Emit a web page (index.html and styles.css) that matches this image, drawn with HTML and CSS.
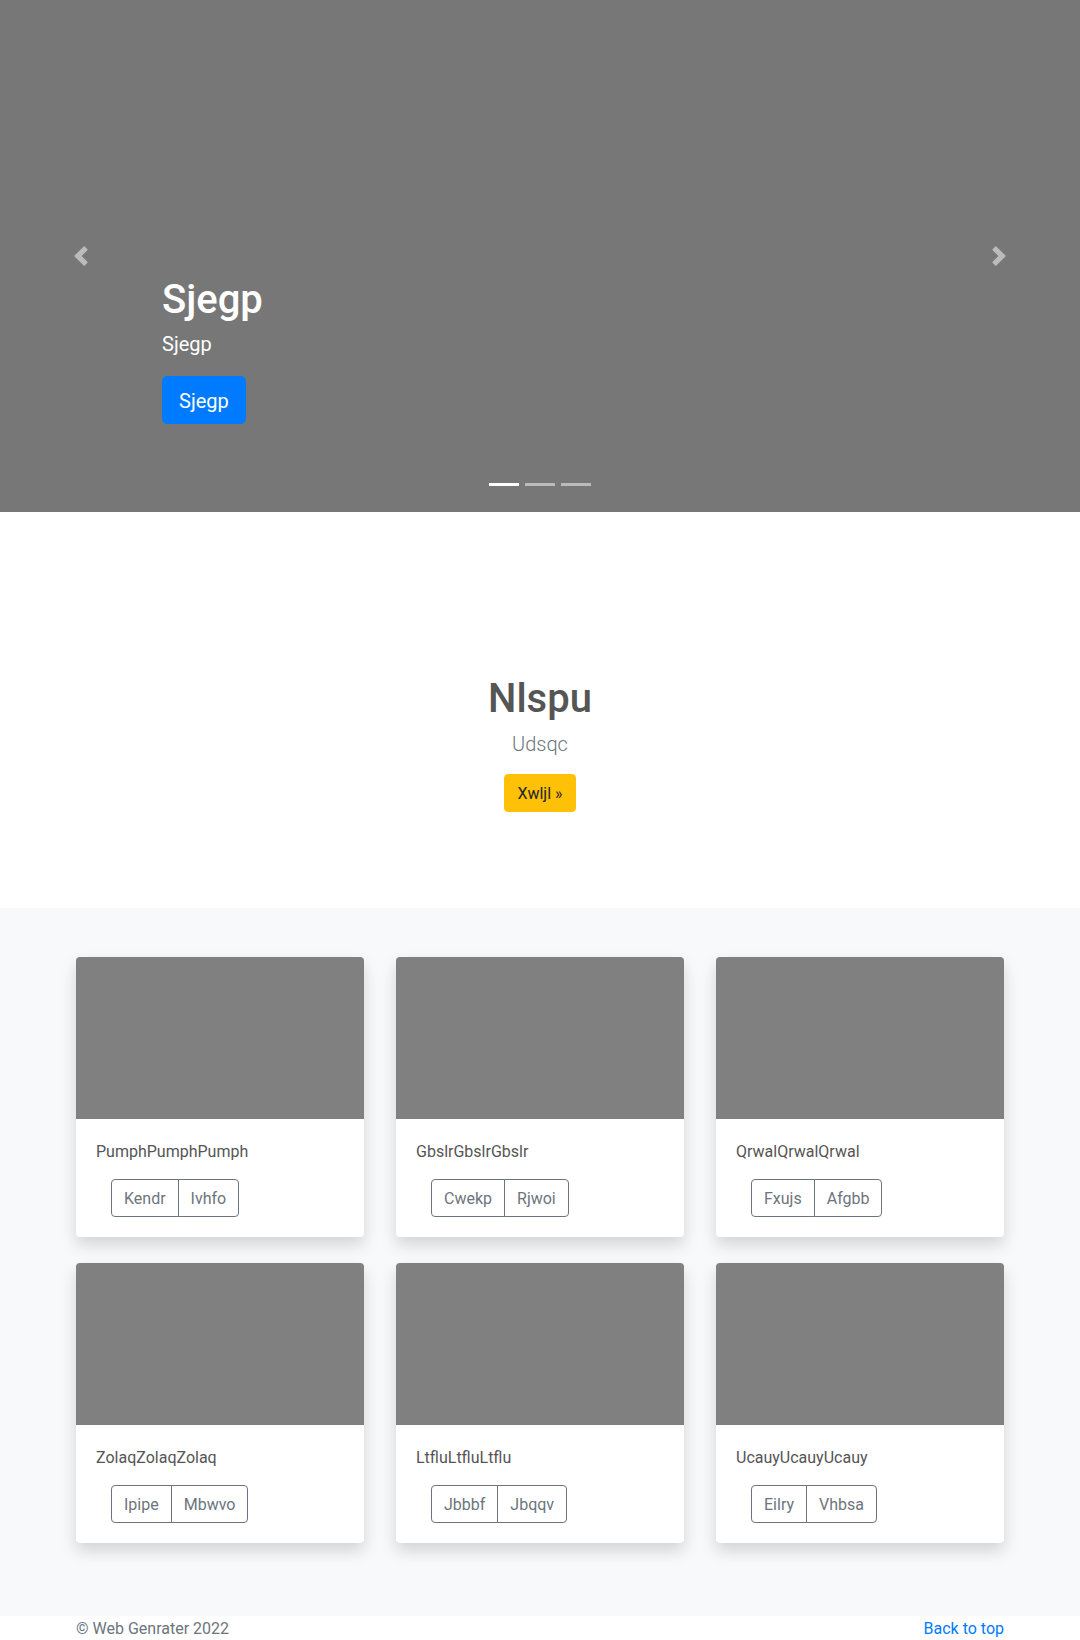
FILE: index.html
```html
<!DOCTYPE html>
<html lang="en">
<head>
<meta charset="utf-8">
<title>Album</title>
<link rel="stylesheet" href="styles.css">
</head>
<body>
<main>
  <div class="carousel">
    <ol class="carousel-indicators">
      <li class="active"></li>
      <li></li>
      <li></li>
    </ol>
    <div class="carousel-caption">
      <h1 class="caption-title">Sjegp</h1>
      <p class="caption-text">Sjegp</p>
      <a class="btn btn-lg btn-primary" href="#">Sjegp</a>
    </div>
    <a class="carousel-control prev" href="#">
      <svg width="20" height="20" viewBox="0 0 8 8"><path fill="#fff" d="M5.25 0l-4 4 4 4 1.5-1.5L4.25 4l2.5-2.5L5.25 0z"/></svg>
    </a>
    <a class="carousel-control next" href="#">
      <svg width="20" height="20" viewBox="0 0 8 8"><path fill="#fff" d="M2.75 0l-1.5 1.5L3.75 4l-2.5 2.5L2.75 8l4-4-4-4z"/></svg>
    </a>
  </div>

  <section class="intro">
    <h1 class="intro-title">Nlspu</h1>
    <p class="intro-lead">Udsqc</p>
    <a class="btn btn-warning" href="#">Xwljl »</a>
  </section>

  <div class="album">
    <div class="album-grid">
      <div class="card">
        <div class="card-img"></div>
        <div class="card-body">
          <p class="card-text">PumphPumphPumph</p>
          <div class="btn-group"><button class="btn-outline">Kendr</button><button class="btn-outline">Ivhfo</button></div>
        </div>
      </div>
      <div class="card">
        <div class="card-img"></div>
        <div class="card-body">
          <p class="card-text">GbslrGbslrGbslr</p>
          <div class="btn-group"><button class="btn-outline">Cwekp</button><button class="btn-outline">Rjwoi</button></div>
        </div>
      </div>
      <div class="card">
        <div class="card-img"></div>
        <div class="card-body">
          <p class="card-text">QrwalQrwalQrwal</p>
          <div class="btn-group"><button class="btn-outline">Fxujs</button><button class="btn-outline">Afgbb</button></div>
        </div>
      </div>
      <div class="card">
        <div class="card-img"></div>
        <div class="card-body">
          <p class="card-text">ZolaqZolaqZolaq</p>
          <div class="btn-group"><button class="btn-outline">Ipipe</button><button class="btn-outline">Mbwvo</button></div>
        </div>
      </div>
      <div class="card">
        <div class="card-img"></div>
        <div class="card-body">
          <p class="card-text">LtfluLtfluLtflu</p>
          <div class="btn-group"><button class="btn-outline">Jbbbf</button><button class="btn-outline">Jbqqv</button></div>
        </div>
      </div>
      <div class="card">
        <div class="card-img"></div>
        <div class="card-body">
          <p class="card-text">UcauyUcauyUcauy</p>
          <div class="btn-group"><button class="btn-outline">Eilry</button><button class="btn-outline">Vhbsa</button></div>
        </div>
      </div>
    </div>
  </div>
</main>
<footer class="footer">
  <p class="copy">© Web Genrater 2022</p>
  <a class="back" href="#">Back to top</a>
</footer>
</body>
</html>
```

FILE: styles.css
```css
* { box-sizing: border-box; }
html, body { margin: 0; padding: 0; }
body {
  font-family: "Segoe UI", Roboto, "Noto Sans", "Liberation Sans", sans-serif;
  font-size: 16px;
  line-height: 24px;
  color: #212529;
  background: #fff;
}
a { text-decoration: none; }
p, h1 { margin: 0; }

/* Carousel */
.carousel {
  position: relative;
  height: 512px;
  background: #777;
  padding: 276px 162px 0;
}
.carousel-caption { color: #fff; display: flex; flex-direction: column; align-items: flex-start; }
.caption-title { font-size: 40px; line-height: 48px; font-weight: 500; margin-bottom: 5px; }
.caption-text { font-size: 20px; line-height: 30px; margin-bottom: 17px; }
.btn {
  display: inline-block;
  border: 1px solid transparent;
  border-radius: 4px;
  font-size: 16px;
  line-height: 24px;
  padding: 7px 12px 5px;
}
.btn-lg { font-size: 20px; line-height: 30px; padding: 9px 16px 7px; border-radius: 5px; }
.btn-primary { background: #007bff; color: #fff; border-color: #007bff; }
.btn-warning { background: #ffc107; color: #212529; border-color: #ffc107; }

.carousel-control {
  position: absolute;
  top: 0;
  bottom: 0;
  width: 162px;
  display: flex;
  align-items: center;
  justify-content: center;
  opacity: .5;
}
.carousel-control.prev { left: 0; }
.carousel-control.next { right: 0; }

.carousel-indicators {
  position: absolute;
  left: 0;
  right: 0;
  bottom: 26px;
  margin: 0;
  padding: 0;
  list-style: none;
  display: flex;
  justify-content: center;
  gap: 6px;
}
.carousel-indicators li { width: 30px; height: 3px; background: #fff; opacity: .5; }
.carousel-indicators li.active { opacity: 1; }

/* Intro */
.intro {
  text-align: center;
  padding: 163px 0 96px;
  display: flex;
  flex-direction: column;
  align-items: center;
}
.intro-title { font-size: 40px; line-height: 48px; font-weight: 500; color: #555; margin-bottom: 6px; }
.intro-lead { font-size: 20px; line-height: 30px; font-weight: 300; color: #6c757d; margin-bottom: 15px; }

/* Album */
.album { background: #f8f9fa; padding: 49px 0 73px; }
.album-grid {
  width: 928px;
  margin: 0 auto;
  display: grid;
  grid-template-columns: repeat(3, 1fr);
  column-gap: 32px;
  row-gap: 26px;
}
.card {
  background: #fff;
  border-radius: 4px;
  overflow: hidden;
  box-shadow: 0 8px 16px rgba(0,0,0,.15);
}
.card-img { height: 162px; background: #808080; }
.card-body { padding: 20px; }
.card-text { color: #555; padding-top: 1px; margin-bottom: 15px; }
.btn-group { display: inline-flex; margin-left: 15px; }
.btn-outline {
  font-family: inherit;
  font-size: 16px;
  line-height: 24px;
  padding: 7px 12px 5px;
  color: #6c757d;
  background: transparent;
  border: 1px solid #6c757d;
  margin: 0;
}
.btn-outline:first-child { border-radius: 4px 0 0 4px; }
.btn-outline + .btn-outline { margin-left: -1px; border-radius: 0 4px 4px 0; }

/* Footer */
.footer {
  width: 928px;
  margin: 0 auto;
  padding-top: 1px;
  display: flex;
  justify-content: space-between;
  color: #6c757d;
}
.back { color: #007bff; }
```
